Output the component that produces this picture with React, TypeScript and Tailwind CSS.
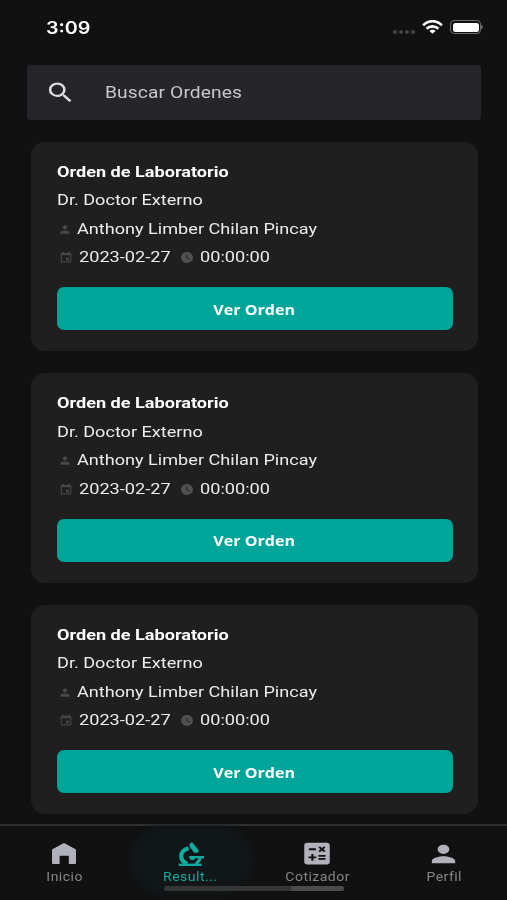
import type { ReactNode } from "react";
import { MdCalculate, MdEvent, MdPerson, MdSearch, MdWatchLater } from "react-icons/md";

function StatusBar() {
  return (
    <header className="flex h-[65px] shrink-0 items-start justify-between pl-[46px] pr-[24px] pt-[15px]">
      <span className="mt-px origin-left scale-x-[1.16] font-[Inter,sans-serif] text-[17px] leading-[24px] font-semibold">3:09</span>
      <div className="flex items-center gap-[7px] pt-[5px]">
        <div className="mt-[9px] flex gap-[2px]">
          {[0, 1, 2, 3].map((n) => (
            <i key={n} className="h-[4px] w-[4px] rounded-full bg-[#454545]" />
          ))}
        </div>
        <svg width="21" height="14" viewBox="0 0 22 14" preserveAspectRatio="none" fill="none" stroke="#fff" strokeWidth="2.7">
          <path d="M1.2 5.2C6.8-.2 15.2-.2 20.8 5.2" />
          <path d="M4.8 8.8c3.6-3.3 8.8-3.3 12.4 0" />
          <path d="M11 13.7 7.8 11c1.6-1.6 4.8-1.6 6.4 0z" fill="#fff" stroke="none" />
        </svg>
        <div className="flex items-center">
          <div className="h-[14px] w-[31px] rounded-[4px] border border-[#6b6b6b] p-[1.5px]">
            <div className="h-full rounded-[2.5px] bg-white" />
          </div>
          <i className="h-[4px] w-[2px] rounded-r-full bg-[#6b6b6b]" />
        </div>
      </div>
    </header>
  );
}

function OrderCard() {
  return (
    <article className="h-[209.5px] shrink-0 rounded-[14px] bg-[#1f1f1f] px-[26px] pt-[16px] text-[15px] leading-[28.5px] text-[#ececec]">
      <h2 className="w-fit origin-left scale-x-[1.207] font-bold whitespace-nowrap text-white">Orden de Laboratorio</h2>
      <p className="w-fit origin-left scale-x-[1.207] whitespace-nowrap">Dr. Doctor Externo</p>
      <div className="flex items-center">
        <MdPerson className="ml-px h-[13px] w-[14px] scale-x-110 text-[#484848]" />
        <span className="ml-[5px] origin-left scale-x-[1.207] whitespace-nowrap">Anthony Limber Chilan Pincay</span>
      </div>
      <div className="flex items-center">
        <MdEvent className="ml-[2px] h-[13px] w-[14px] scale-x-110 text-[#444444]" />
        <span className="ml-[5.500px] w-[92px]">
          <span className="inline-block origin-left scale-x-[1.21] whitespace-nowrap">2023-02-27</span>
        </span>
        <MdWatchLater className="ml-[9.500px] h-[13px] w-[14px] scale-x-110 text-[#505050]" />
        <span className="ml-[5.500px] origin-left scale-x-[1.21] whitespace-nowrap">00:00:00</span>
      </div>
      <button className="mt-[15.500px] flex h-[43px] w-[395.500px] items-center justify-center rounded-[7px] bg-[#00a59a] font-['Open_Sans',sans-serif] text-[15px] font-bold text-white">
        <span className="-ml-px scale-x-[1.07]">Ver Orden</span>
      </button>
    </article>
  );
}

function HomeIcon() {
  return (
    <svg width="24" height="21" viewBox="0 0 24 21" fill="currentColor">
      <path d="M0 7.4Q0 6.6.8 6.1L11 .4q1-.6 2 0l10.200 5.700q.8.5.8 1.300V20q0 1-1 1h-6.200v-8.200H7.600V21H1q-1 0-1-1z" />
    </svg>
  );
}

function MicroscopeIcon() {
  return (
    <svg width="26" height="24" viewBox="0 0 26 24" fill="none" stroke="currentColor">
      <path d="m11.4 2 1-.4.4-1.2 1.800.1.8 1.200 5.300 6.500-.5 2-2.200.9-2-.6-4.300-5.700z" fill="currentColor" stroke="none" />
      <path d="M10.600 6.400C6 7.200 3.200 10.300 3.200 14c0 3.400 2.200 6.500 6.200 7.700" strokeWidth="4.200" />
      <path d="M.8 22.800h22.800" strokeWidth="2.400" />
      <path d="M11.200 15.200H26" strokeWidth="2.400" />
      <path d="M22.300 16c-.8 2.600-2.300 4.400-4.500 6" strokeWidth="3" />
      <path d="M11.800 16h5.200c-.5 1.500-1.500 2.200-2.900 2.200-1.100 0-2-.8-2.300-2.200z" fill="currentColor" stroke="none" />
    </svg>
  );
}

function Tab({ icon, label, active = false }: { icon: ReactNode; label: string; active?: boolean }) {
  return (
    <div className={active ? "flex flex-col items-center text-[#10aa9e]" : "flex flex-col items-center text-[#b1b1bc]"}>
      <div className="flex h-[27px] items-center">{icon}</div>
      <span className={active ? "mt-px scale-x-[1.17] text-[12px] leading-[18px] tracking-[0.4px]" : "mt-px scale-x-[1.17] text-[12px] leading-[18px] tracking-[0.4px] text-[#858585]"}>
        {label}
      </span>
    </div>
  );
}

export default function App() {
  return (
    <main className="relative flex h-[900px] w-[507px] flex-col overflow-hidden bg-[#111111] font-[Roboto,sans-serif] text-white">
      <StatusBar />
      <div className="ml-[27px] flex h-[55px] w-[454px] shrink-0 items-center rounded-[4px] bg-[#26252a]">
        <MdSearch className="-mt-px ml-[17.500px] h-[27px] w-[31px] text-[#dedede]" preserveAspectRatio="none" />
        <span className="ml-[29.500px] origin-left scale-x-[1.2] text-[16px] tracking-[0.1px] text-[#c8c8ca]">Buscar Ordenes</span>
      </div>
      <section className="mt-[21.800px] ml-[31px] flex h-[682px] w-[447px] shrink-0 flex-col gap-[22px]">
        <OrderCard />
        <OrderCard />
        <OrderCard />
      </section>
      <nav className="relative mt-auto grid h-[76px] shrink-0 grid-cols-4 border-t-2 border-[#303030] bg-[#111111] pt-[14px] pl-px">
        <div className="absolute top-0 left-[130px] h-[68px] w-[123px] rounded-[34px] bg-[#111719] blur-[3px]" />
        <Tab icon={<HomeIcon />} label="Inicio" />
        <div className="relative">
          <Tab icon={<MicroscopeIcon />} label="Result..." active />
        </div>
        <Tab icon={<MdCalculate className="h-[29px] w-[34px]" preserveAspectRatio="none" />} label="Cotizador" />
        <Tab icon={<MdPerson className="h-[28px] w-[35px]" preserveAspectRatio="none" />} label="Perfil" />
        <div className="absolute bottom-[9px] left-[164px] flex h-[5px] w-[180px] overflow-hidden rounded-full bg-[#363637]">
          <div className="ml-auto w-[53px] bg-[#4b4b4b]" />
        </div>
      </nav>
    </main>
  );
}
